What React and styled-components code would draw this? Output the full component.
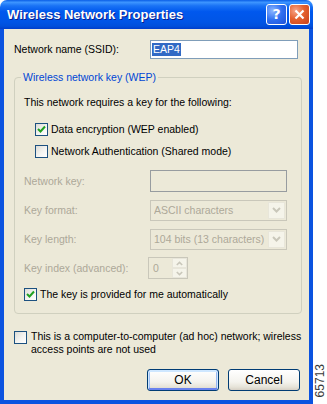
import React from 'react';
import styled, { createGlobalStyle } from 'styled-components';

const GlobalStyle = createGlobalStyle`
  html, body { margin: 0; padding: 0; background: #fff; }
  body {
    font-family: "Liberation Sans", Arial, sans-serif;
    font-size: 10.5px;
    line-height: 13px;
    color: #000;
  }
`;

const Page = styled.div`
  display: flex;
  width: 327px;
  height: 404px;
  overflow: hidden;
`;

const Window = styled.div`
  width: 313px;
  display: flex;
  flex-direction: column;
`;

const TitleBar = styled.div`
  height: 29px;
  flex: none;
  display: flex;
  align-items: center;
  padding: 0 3px 0 7px;
  border-radius: 7px 7px 0 0;
  background: linear-gradient(
    to bottom,
    #0a5ee6 0%,
    #3d95ff 8%,
    #1a73f5 20%,
    #0058ee 40%,
    #0055e6 75%,
    #0050dc 90%,
    #003ecb 100%
  );
`;

const Title = styled.div`
  flex: 1;
  color: #fff;
  font-weight: bold;
  font-size: 13px;
  text-shadow: 1px 1px 0 #0a1e8c;
  padding-bottom: 1px;
`;

const CaptionButton = styled.div`
  width: 21px;
  height: 21px;
  box-sizing: border-box;
  margin-left: 2px;
  border: 1px solid #fff;
  border-radius: 3px;
  display: flex;
  align-items: center;
  justify-content: center;
  color: #fff;
  font-family: "DejaVu Sans", sans-serif;
  font-weight: bold;
  font-size: 14px;
  background: ${({ $close }) =>
    $close
      ? 'radial-gradient(circle at 30% 30%, #f7a58a 0%, #e5612f 45%, #c8401b 100%)'
      : 'radial-gradient(circle at 30% 30%, #8cb6ff 0%, #2f6ff0 50%, #1f52d8 100%)'};
`;

const Body = styled.div`
  flex: 1;
  display: flex;
  flex-direction: column;
  background: #ece9d8;
  border: 4px solid #0b53e0;
  border-top: 0;
  padding: 11px 7px 0 10px;
`;

const FieldRow = styled.div`
  display: grid;
  grid-template-columns: 136px 148px;
  align-items: center;
`;

const Label = styled.span`
  color: ${({ $disabled }) => ($disabled ? '#aca899' : '#000')};
  white-space: nowrap;
`;

const TextInput = styled.div`
  height: 19px;
  box-sizing: border-box;
  border: 1px solid #7f9db9;
  background: #fff;
  display: flex;
  align-items: center;
  padding: 0 1px;
`;

const Selected = styled.span`
  background: #316ac5;
  color: #fff;
  padding: 0 1px;
`;

const GroupBox = styled.fieldset`
  margin: 12px 0 0 0;
  padding: 12px 8px 12px 9px;
  border: 1px solid #d0d0bf;
  border-radius: 4px;
  display: flex;
  flex-direction: column;
  min-width: 0;
`;

const Legend = styled.legend`
  color: #0046d5;
  padding: 0 2px;
  margin-left: -3px;
`;

const CheckRow = styled.div`
  display: flex;
  align-items: flex-start;
  gap: ${({ $gap }) => $gap || 3}px;
  margin-top: ${({ $top }) => $top}px;
  margin-left: ${({ $indent }) => $indent || 0}px;
  white-space: nowrap;
`;

const Box = styled.div`
  width: 13px;
  height: 13px;
  flex: none;
  box-sizing: border-box;
  border: 1px solid #1c5180;
  background: linear-gradient(135deg, #dcdcd7 0%, #f4f4f1 55%, #ffffff 100%);
  display: flex;
  align-items: center;
  justify-content: center;
  margin-top: ${({ $top }) => $top || 0}px;
`;

const KeyGrid = styled.div`
  display: grid;
  grid-template-columns: 126px 137px;
  grid-auto-rows: 22px;
  row-gap: 7px;
  align-items: center;
  margin-top: 12px;
`;

const DisabledEdit = styled.div`
  height: 22px;
  box-sizing: border-box;
  border: 1px solid #979ca0;
  background: #ece9d8;
`;

const DisabledSelect = styled.div`
  height: 21px;
  box-sizing: border-box;
  border: 1px solid #c9c7ba;
  background: #ece9d8;
  display: flex;
  align-items: center;
  padding: 0 1px 0 3px;
  color: #aca899;
  white-space: nowrap;
  overflow: hidden;
`;

const SelectText = styled.span`
  flex: 1;
  overflow: hidden;
`;

const DropButton = styled.div`
  width: 17px;
  height: 17px;
  flex: none;
  background: #f5f4ea;
  border: 1px solid #e8e6da;
  box-sizing: border-box;
  display: flex;
  align-items: center;
  justify-content: center;
`;

const Spin = styled.div`
  width: 40px;
  height: 22px;
  margin-left: -2px;
  box-sizing: border-box;
  border: 1px solid #c9c7ba;
  display: flex;
  align-items: center;
  color: #aca899;
  padding-left: 4px;
`;

const SpinButtons = styled.div`
  margin-left: auto;
  width: 15px;
  height: 20px;
  display: flex;
  flex-direction: column;
`;

const SpinArrow = styled.div`
  flex: 1;
  background: #f5f4ea;
  border: 1px solid #e8e6da;
  box-sizing: border-box;
  display: flex;
  align-items: center;
  justify-content: center;
`;

const ButtonRow = styled.div`
  display: flex;
  justify-content: flex-end;
  gap: 9px;
  margin-top: 13px;
  padding-right: 2px;
`;

const Button = styled.div`
  width: 72px;
  height: 22px;
  box-sizing: border-box;
  border: 1px solid #003c74;
  border-radius: 3px;
  display: flex;
  align-items: center;
  justify-content: center;
  font-size: 12px;
  background: linear-gradient(to bottom, #ffffff 0%, #f4f3ee 60%, #e6e3d8 85%, #d6d0c5 100%);
  box-shadow: ${({ $default }) =>
    $default
      ? 'inset 0 1px 0 1px #cee7ff, inset 0 -1px 0 1px #6982ee, inset 1px 0 0 1px #a2c2f5, inset -1px 0 0 1px #9ab8f0'
      : 'none'};
`;

const Side = styled.div`
  flex: 1;
  display: flex;
  align-items: flex-end;
  justify-content: center;
  padding-bottom: 7px;
`;

const FigNumber = styled.span`
  writing-mode: vertical-rl;
  transform: rotate(180deg);
  font-size: 12px;
  line-height: 12px;
  color: #3a3a3a;
`;

const Check = () => (
  <svg width="9" height="9" viewBox="0 0 9 9">
    <path d="M1 4 L3.5 6.5 L8 1.5" fill="none" stroke="#21a121" strokeWidth="2" />
  </svg>
);

const Chevron = ({ up, w = 9, h = 6 }) => (
  <svg width={w} height={h} viewBox="0 0 9 6">
    <path
      d={up ? 'M1 5 L4.5 1.5 L8 5' : 'M1 1 L4.5 4.5 L8 1'}
      fill="none"
      stroke="#c9c7ba"
      strokeWidth="2"
    />
  </svg>
);

const CloseGlyph = () => (
  <svg width="11" height="11" viewBox="0 0 11 11">
    <path d="M1.5 1.5 L9.5 9.5 M9.5 1.5 L1.5 9.5" stroke="#fff" strokeWidth="2.2" />
  </svg>
);

const CheckBox = ({ checked, top }) => <Box $top={top}>{checked && <Check />}</Box>;

const App = () => {
  return (
    <Page>
      <GlobalStyle />
      <Window>
        <TitleBar>
          <Title>Wireless Network Properties</Title>
          <CaptionButton>?</CaptionButton>
          <CaptionButton $close>
            <CloseGlyph />
          </CaptionButton>
        </TitleBar>
        <Body>
          <FieldRow>
            <Label>Network name (SSID):</Label>
            <TextInput>
              <Selected>EAP4</Selected>
            </TextInput>
          </FieldRow>

          <GroupBox>
            <Legend>Wireless network key (WEP)</Legend>
            <Label>This network requires a key for the following:</Label>

            <CheckRow $top={14} $indent={11}>
              <CheckBox checked />
              <span>Data encryption (WEP enabled)</span>
            </CheckRow>
            <CheckRow $top={9} $indent={11}>
              <CheckBox />
              <span>Network Authentication (Shared mode)</span>
            </CheckRow>

            <KeyGrid>
              <Label $disabled>Network key:</Label>
              <DisabledEdit />

              <Label $disabled>Key format:</Label>
              <DisabledSelect>
                <SelectText>ASCII characters</SelectText>
                <DropButton>
                  <Chevron />
                </DropButton>
              </DisabledSelect>

              <Label $disabled>Key length:</Label>
              <DisabledSelect>
                <SelectText>104 bits (13 characters)</SelectText>
                <DropButton>
                  <Chevron />
                </DropButton>
              </DisabledSelect>

              <Label $disabled>Key index (advanced):</Label>
              <Spin>
                0
                <SpinButtons>
                  <SpinArrow>
                    <Chevron up w={7} h={5} />
                  </SpinArrow>
                  <SpinArrow>
                    <Chevron w={7} h={5} />
                  </SpinArrow>
                </SpinButtons>
              </Spin>
            </KeyGrid>

            <CheckRow $top={9}>
              <CheckBox checked />
              <span>The key is provided for me automatically</span>
            </CheckRow>
          </GroupBox>

          <CheckRow $top={16} $gap={4}>
            <CheckBox top={1} />
            <span>
              This is a computer-to-computer (ad hoc) network; wireless
              <br />
              access points are not used
            </span>
          </CheckRow>

          <ButtonRow>
            <Button $default>OK</Button>
            <Button>Cancel</Button>
          </ButtonRow>
        </Body>
      </Window>
      <Side>
        <FigNumber>65713</FigNumber>
      </Side>
    </Page>
  );
};

export default App;
